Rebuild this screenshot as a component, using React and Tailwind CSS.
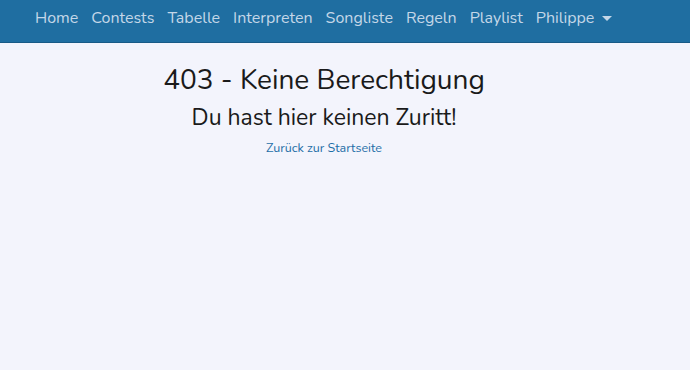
export default function App() {
  const links = ["Home", "Contests", "Tabelle", "Interpreten", "Songliste", "Regeln", "Playlist"];

  return (
    <div className="min-h-[370px] bg-[#f3f4fc] font-['Nunito','Open_Sans',sans-serif]">
      {/* navbar */}
      <nav className="h-[43px] bg-[#1f6ea1] border-b border-[#185a86] flex items-center pl-[28.5px] pb-[6px]">
        {links.map((l) => (
          <a key={l} href="#" className="px-[6.5px] text-[16px] text-[#c4d7e8] leading-none">
            {l}
          </a>
        ))}
        <a href="#" className="px-[6.5px] text-[16px] text-[#c4d7e8] leading-none flex items-center">
          Philippe
          <span className="ml-[8px] inline-block w-0 h-0 border-l-[5px] border-r-[5px] border-t-[5px] border-l-transparent border-r-transparent border-t-[#c4d7e8]" />
        </a>
      </nav>

      {/* content */}
      <div className="w-[648px] text-center pt-[18px]">
        <h1 className="text-[28px] leading-[38px] text-[#1a1a1a]">403 - Keine Berechtigung</h1>
        <h2 className="text-[23px] leading-[32px] text-[#1a1a1a] mt-[3px]">Du hast hier keinen Zuritt!</h2>
        <a href="#" className="block mt-[5px] text-[12.5px] text-[#1e6ea7]">
          Zurück zur Startseite
        </a>
      </div>
    </div>
  );
}
